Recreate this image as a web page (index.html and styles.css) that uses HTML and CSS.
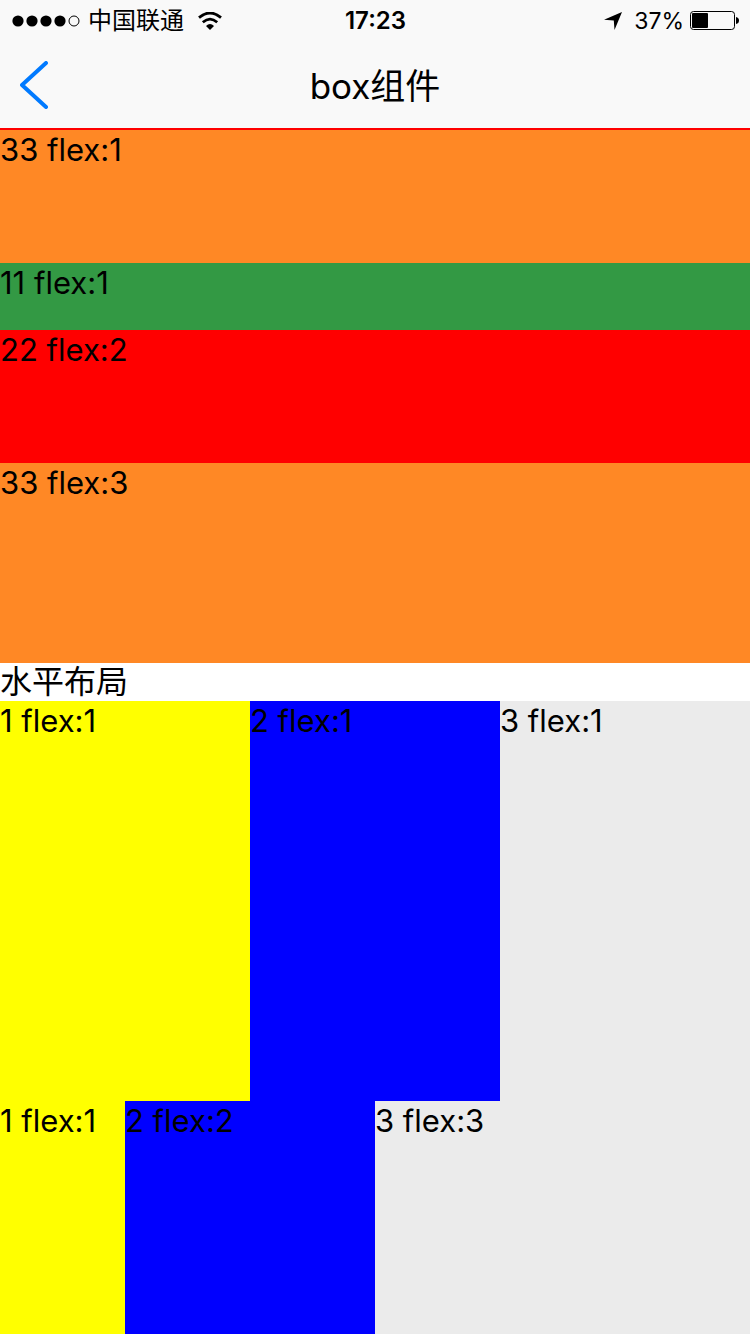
FILE: index.html
```html
<!DOCTYPE html>
<html lang="zh-CN">
<head>
<meta charset="utf-8">
<meta name="viewport" content="width=device-width">
<title>box组件</title>
<link rel="stylesheet" href="styles.css">
</head>
<body>
<header class="header">
  <div class="status">
    <div class="status-left">
      <svg class="signal" width="68" height="12" viewBox="0 0 68 12" aria-hidden="true">
        <circle cx="6" cy="6" r="5.6"/><circle cx="20" cy="6" r="5.6"/><circle cx="34" cy="6" r="5.6"/><circle cx="48" cy="6" r="5.6"/>
        <circle cx="62" cy="6" r="5" fill="none" stroke="#000"/>
      </svg>
      <span class="carrier">中国联通</span>
      <svg class="wifi" width="24" height="18" viewBox="0 0 24 18" aria-hidden="true">
        <path d="M1 5.600Q12-3.600 23 5.600" fill="none" stroke="#000" stroke-width="2.800"/>
        <path d="M4.800 10.200Q12 3.900 19.200 10.200" fill="none" stroke="#000" stroke-width="2.700"/>
        <path d="M8 14Q12 10.200 16 14L12 18Z"/>
      </svg>
    </div>
    <span class="time">17:23</span>
    <div class="status-right">
      <svg class="location" width="18" height="18" viewBox="0 0 18 18" aria-hidden="true"><path d="M18 0L10.500 18L9.800 8.600L0 7.800Z"/></svg>
      <span class="percent">37%</span>
      <svg class="battery" width="49" height="20" viewBox="0 0 49 20" aria-hidden="true">
        <rect x=".5" y=".5" width="44" height="18" rx="3" fill="none" stroke="#000"/>
        <rect x="2" y="2" width="16" height="15" rx="1"/>
        <path d="M46 6Q49 6.500 49 9.500T46 13Z"/>
      </svg>
    </div>
  </div>
  <nav class="navbar">
    <button class="back" type="button" aria-label="返回">
      <svg width="28" height="48" viewBox="0 0 28 48" aria-hidden="true"><path d="M26 2L2 24L26 46" fill="none" stroke="#007aff" stroke-width="4" stroke-linecap="round" stroke-linejoin="round"/></svg>
    </button>
    <h1 class="title">box组件</h1>
  </nav>
</header>
<main class="content">
  <div class="panel orange">33 flex:1</div>
  <section class="column">
    <div class="grow-1 green">11 flex:1</div>
    <div class="grow-2 red">22 flex:2</div>
    <div class="grow-3 orange">33 flex:3</div>
  </section>
  <h2 class="caption">水平布局</h2>
  <section class="row">
    <div class="grow-1 yellow">1 flex:1</div>
    <div class="grow-1 blue">2 flex:1</div>
    <div class="grow-1 gray">3 flex:1</div>
  </section>
  <section class="row row-last">
    <div class="grow-1 yellow">1 flex:1</div>
    <div class="grow-2 blue">2 flex:2</div>
    <div class="grow-3 gray">3 flex:3</div>
  </section>
</main>
</body>
</html>
```
FILE: styles.css
```css
* { box-sizing: border-box; }
body {
  margin: 0;
  min-height: 100vh;
  display: flex;
  flex-direction: column;
  background: #fff;
  color: #000;
  font: 31px/40px Inter, "Noto Sans CJK SC", sans-serif;
}
.header { background: #f9f9f9; }
.status {
  display: grid;
  grid-template-columns: 1fr auto 1fr;
  align-items: center;
  height: 41px;
  padding: 0 11px 0 12px;
  font-size: 24px;
}
.status-left, .status-right { display: flex; align-items: center; }
.status-left { gap: 8px; }
.status-right { justify-content: flex-end; gap: 6px; }
.wifi { margin-left: 6px; }
.location { margin-right: 6px; }
.percent { font-size: 23px; }
.time { font-weight: 600; }
.navbar {
  display: grid;
  grid-template-columns: 80px 1fr 80px;
  align-items: center;
  height: 87px;
}
.back {
  display: flex;
  padding: 0 20px;
  border: 0;
  background: none;
}
.title {
  margin: 0;
  padding-top: 2px;
  font-size: 35px;
  font-weight: 400;
  text-align: center;
}
.content { flex: 1; display: flex; flex-direction: column; }
.panel { height: 135px; border-top: 2px solid #f00; }
.column { display: flex; flex-direction: column; height: 400px; }
.caption { margin: 0; font-size: 32px; line-height: 38px; font-weight: 400; }
.row { display: flex; height: 400px; }
.row-last { flex: 1; height: auto; min-height: 200px; }
.grow-1 { flex: 1 1 0; }
.grow-2 { flex: 2 1 0; }
.grow-3 { flex: 3 1 0; }
.orange { background: #ff8825; }
.green { background: #339944; }
.red { background: #f00; }
.yellow { background: #ff0; }
.blue { background: #00f; }
.gray { background: #ebebeb; }
```
